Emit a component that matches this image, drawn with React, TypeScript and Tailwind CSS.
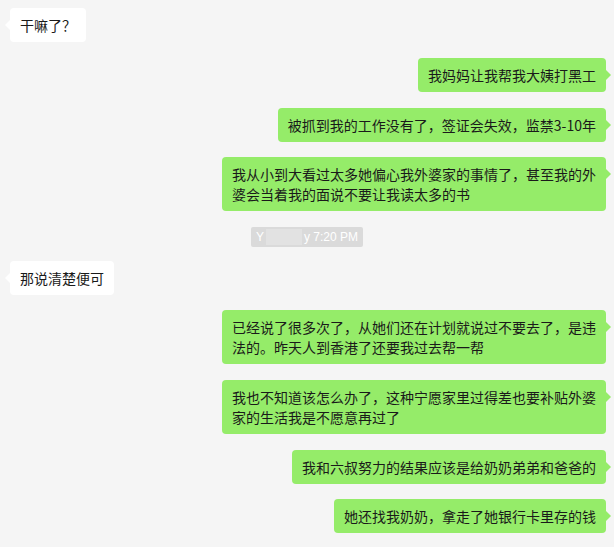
import React from "react";

const font = { fontFamily: '"Noto Sans CJK SC", "Noto Sans", sans-serif' };

function Left({ text, mt }: { text: string; mt: string }) {
  return (
    <div className={`flex justify-start pl-[10px] ${mt}`}>
      <div className="relative bg-white rounded-[4px] px-[10px] py-[7px] text-[14px] leading-[20px] text-[#1a1a1a] max-w-[384px]">
        <span className="absolute left-[-5px] top-[12px] w-0 h-0 border-y-[5px] border-y-transparent border-r-[5px] border-r-white" />
        {text}
      </div>
    </div>
  );
}

function Right({ text, mt }: { text: string; mt: string }) {
  return (
    <div className={`flex justify-end pr-[8px] ${mt}`}>
      <div className="relative bg-[#95ec69] rounded-[4px] px-[10px] py-[7px] text-[14px] leading-[20px] text-[#1a1a1a] max-w-[384px]">
        <span className="absolute right-[-5px] top-[12px] w-0 h-0 border-y-[5px] border-y-transparent border-l-[5px] border-l-[#95ec69]" />
        {text}
      </div>
    </div>
  );
}

export default function App() {
  return (
    <div className="w-[614px] h-[547px] bg-[#f5f5f5] overflow-hidden pt-[8px]" style={font}>
      <Left text="干嘛了？" mt="mt-0" />
      <Right text="我妈妈让我帮我大姨打黑工" mt="mt-[16px]" />
      <Right text="被抓到我的工作没有了，签证会失效，监禁3-10年" mt="mt-[16px]" />
      <Right text="我从小到大看过太多她偏心我外婆家的事情了，甚至我的外婆会当着我的面说不要让我读太多的书" mt="mt-[15px]" />
      <div className="flex justify-center mt-[16px]">
        <div className="flex items-center h-[20px] bg-[#dadada] rounded-[2px] px-[5px] text-[12px] text-white" style={{ fontFamily: '"Liberation Sans", Arial, sans-serif' }}>
          <span>Y</span>
          <span className="inline-block w-[36px] h-[16px] bg-[#e2e2e2] mx-[2px]" />
          <span>y 7:20 PM</span>
        </div>
      </div>
      <Left text="那说清楚便可" mt="mt-[14px]" />
      <Right text="已经说了很多次了，从她们还在计划就说过不要去了，是违法的。昨天人到香港了还要我过去帮一帮" mt="mt-[15px]" />
      <Right text="我也不知道该怎么办了，这种宁愿家里过得差也要补贴外婆家的生活我是不愿意再过了" mt="mt-[16px]" />
      <Right text="我和六叔努力的结果应该是给奶奶弟弟和爸爸的" mt="mt-[16px]" />
      <Right text="她还找我奶奶，拿走了她银行卡里存的钱" mt="mt-[15px]" />
    </div>
  );
}
